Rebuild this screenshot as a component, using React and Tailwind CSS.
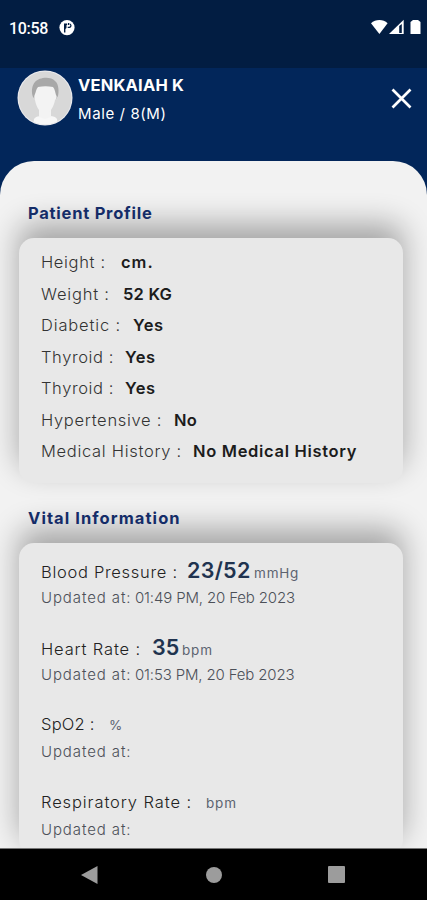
const profile = [
  { label: "Height :", value: "cm.", w: "w-[80px]", lt: "tracking-[0.65px]", vt: "tracking-[1px]" },
  { label: "Weight :", value: "52 KG", w: "w-[82px]", lt: "tracking-[0.8px]", vt: "tracking-[0.2px]" },
  { label: "Diabetic :", value: "Yes", w: "w-[92px]", lt: "tracking-[0.85px]", vt: "tracking-[0.5px]" },
  { label: "Thyroid :", value: "Yes", w: "w-[84px]", lt: "tracking-[0.6px]", vt: "tracking-[0.5px]" },
  { label: "Thyroid :", value: "Yes", w: "w-[84px]", lt: "tracking-[0.6px]", vt: "tracking-[0.5px]" },
  { label: "Hypertensive :", value: "No", w: "w-[133px]", lt: "tracking-[0.7px]", vt: "tracking-[0.3px]" },
  { label: "Medical History :", value: "No Medical History", w: "w-[152px]", lt: "tracking-[0.7px]", vt: "tracking-[0.68px]" },
];

const vitals = [
  { label: "Blood Pressure :", value: "23/52", unit: "mmHg", updated: "01:49 PM, 20 Feb 2023", w: "w-[146px] tracking-[0.7px]", vw: "w-[67px] tracking-[0.3px]" },
  { label: "Heart Rate :", value: "35", unit: "bpm", updated: "01:53 PM, 20 Feb 2023", w: "w-[111px] tracking-[0.85px]", vw: "w-[30px]" },
  { label: "SpO2 :", value: "", unit: "%", updated: "", w: "w-[68px] tracking-[0.2px]", vw: "w-0" },
  { label: "Respiratory Rate :", value: "", unit: "bpm", updated: "", w: "w-[165px] tracking-[0.9px]", vw: "w-0" },
];

function Avatar() {
  return (
    <svg className="h-[56px] w-[56px] shrink-0" viewBox="0 0 56 56">
      <defs>
        <clipPath id="face"><circle cx="28" cy="28" r="26.5" /></clipPath>
      </defs>
      <circle cx="28" cy="28" r="27.5" fill="#ececf0" />
      <g clipPath="url(#face)">
        <rect width="56" height="56" fill="#d8d8d8" />
        <path d="M16 56l1-7c1-2 4-3 7-3h9c3 0 6 1 7 3l1 7z" fill="#f7f7f7" />
        <path d="M22 36h12v11l-6 2-6-2z" fill="#f3f3f3" />
        <path d="M16 27c-2-5-1-12 2-15 4-5 16-6 20-1 4 3 4 11 3 15l-2 3H18z" fill="#a8a8a8" />
        <path d="M18 24c1-2 1-5 3-7 5-1 10-1 15 0 2 2 2 5 3 8 1 1 1 3-1 5-1 6-4 11-7 13-2 1-4 1-6 0-3-2-6-7-7-13-1-2-1-4 0-6z" fill="#f3f3f3" />
      </g>
    </svg>
  );
}

function StatusBar() {
  return (
    <div className="flex h-[68px] items-start justify-between bg-[#021d42] pt-[18px] pl-[9px] pr-[6px] font-[Roboto,sans-serif]">
      <div className="flex h-5 items-center">
        <span className="w-[50px] pt-px text-[16px] font-medium leading-5 tracking-[-0.3px] text-white">10:58</span>
        <svg className="h-4 w-4" viewBox="0 0 16 16">
          <circle cx="8" cy="7.6" r="7.6" fill="#fff" />
          <path d="M5 12.5V3.6h3.2v1.5H7.5v3L6.4 9v3.5zM9 3h1.2v2H9zM10.7 3.4c2.6.7 2.4 4-.2 4.6H8.7V6.8h1.6c1.3-.4 1.3-2 .4-2.3z" fill="#021d42" />
        </svg>
      </div>
      <svg className="h-[19px] w-[51px]" viewBox="0 0 51 19" fill="#fff">
        <path d="M1 5.2C5.6 0.9 13.3 0.9 17.6 5.2L9.4 16z" />
        <path d="M19 16L33.7 1.8V16z" />
        <path d="M29.2 8v7h2.6V6z" fill="#021d42" />
        <path d="M40.5 4l2.5-2h5l2.5 2v12h-10z" />
      </svg>
    </div>
  );
}

export default function App() {
  return (
    <div className="flex h-[900px] w-[427px] flex-col overflow-hidden bg-[#02265a] font-[Inter,sans-serif]">
      <StatusBar />
      <header className="flex h-[93px] shrink-0 items-start pl-[17px] pr-[15px] pt-[2px] text-white">
        <Avatar />
        <div className="ml-[5px] flex flex-col pt-[3px]">
          <h1 className="h-[26px] text-[16.5px] font-bold leading-[24px] tracking-[0.2px]">VENKAIAH K</h1>
          <p className="pt-[2px] text-[15px] leading-[26px] tracking-[0.6px]">Male / 8(M)</p>
        </div>
        <svg className="mt-[18px] ml-auto h-[21px] w-[21px]" viewBox="0 0 21 21" fill="none" stroke="#fff" strokeWidth="2.7">
          <path d="M1.5 1.5l18 18M19.5 1.5l-18 18" />
        </svg>
      </header>

      <main className="min-h-0 flex-1 overflow-hidden rounded-t-[34px] bg-[#f2f2f2] pl-[19px] pr-[24px]">
        <h2 className="ml-[9px] flex h-[77px] items-end pb-[13px] text-[16.5px] font-bold leading-6 tracking-[0.75px] text-[#142c68]">
          <span className="relative z-10">Patient Profile</span>
        </h2>
        <section className="h-[245px] rounded-[15px] bg-[#e8e8e8] pl-[22px] pt-[9px] shadow-[0_-14px_30px_rgba(0,0,0,0.32)]">
          {profile.map((r, i) => (
            <div key={i} className="flex h-[31.5px] items-center whitespace-nowrap text-[16.5px]">
              <span className={"font-light text-[#333] " + r.w + " " + r.lt}>{r.label}</span>
              <span className={"font-semibold text-[#1c1c1c] " + r.vt}>{r.value}</span>
            </div>
          ))}
        </section>
        <h2 className="ml-[9px] flex h-[60px] items-end pb-[13px] text-[16.5px] font-bold leading-6 tracking-[1.07px] text-[#142c68]">
          <span className="relative z-10">Vital Information</span>
        </h2>
        <section className="h-[312px] rounded-[15px] bg-[#e8e8e8] pl-[22px] pt-[11px] shadow-[0_-14px_30px_rgba(0,0,0,0.32)]">
          {vitals.map((v) => (
            <div key={v.label} className="h-[77.2px] whitespace-nowrap">
              <div className="flex h-[32px] items-baseline leading-[32px]">
                <span className={"text-[16.5px] font-light text-[#222] " + v.w}>{v.label}</span>
                <span className={"text-[21.5px] font-semibold text-[#20334f] " + v.vw}>{v.value}</span>
                <span className="text-[13.5px] tracking-[0.8px] text-[#5c6370]">{v.unit}</span>
              </div>
              <p className="flex text-[15px] font-light leading-[23px] text-[#4c5058]">
                <span className="w-[94px] tracking-[0.9px]">Updated at:</span>
                <span className="tracking-[-0.15px]">{v.updated}</span>
              </p>
            </div>
          ))}
        </section>
      </main>

      <nav className="flex h-[52px] shrink-0 items-center border-t border-[#777] bg-black">
        <svg className="ml-[80px] h-[20px] w-[18px]" viewBox="0 0 18 20"><path d="M1 10L17.5 1v18z" fill="#9c9c9c" /></svg>
        <div className="ml-[108px] h-4 w-4 rounded-full bg-[#9c9c9c]" />
        <div className="ml-[106px] h-[17px] w-[17px] rounded-[1px] bg-[#9c9c9c]" />
      </nav>
    </div>
  );
}
